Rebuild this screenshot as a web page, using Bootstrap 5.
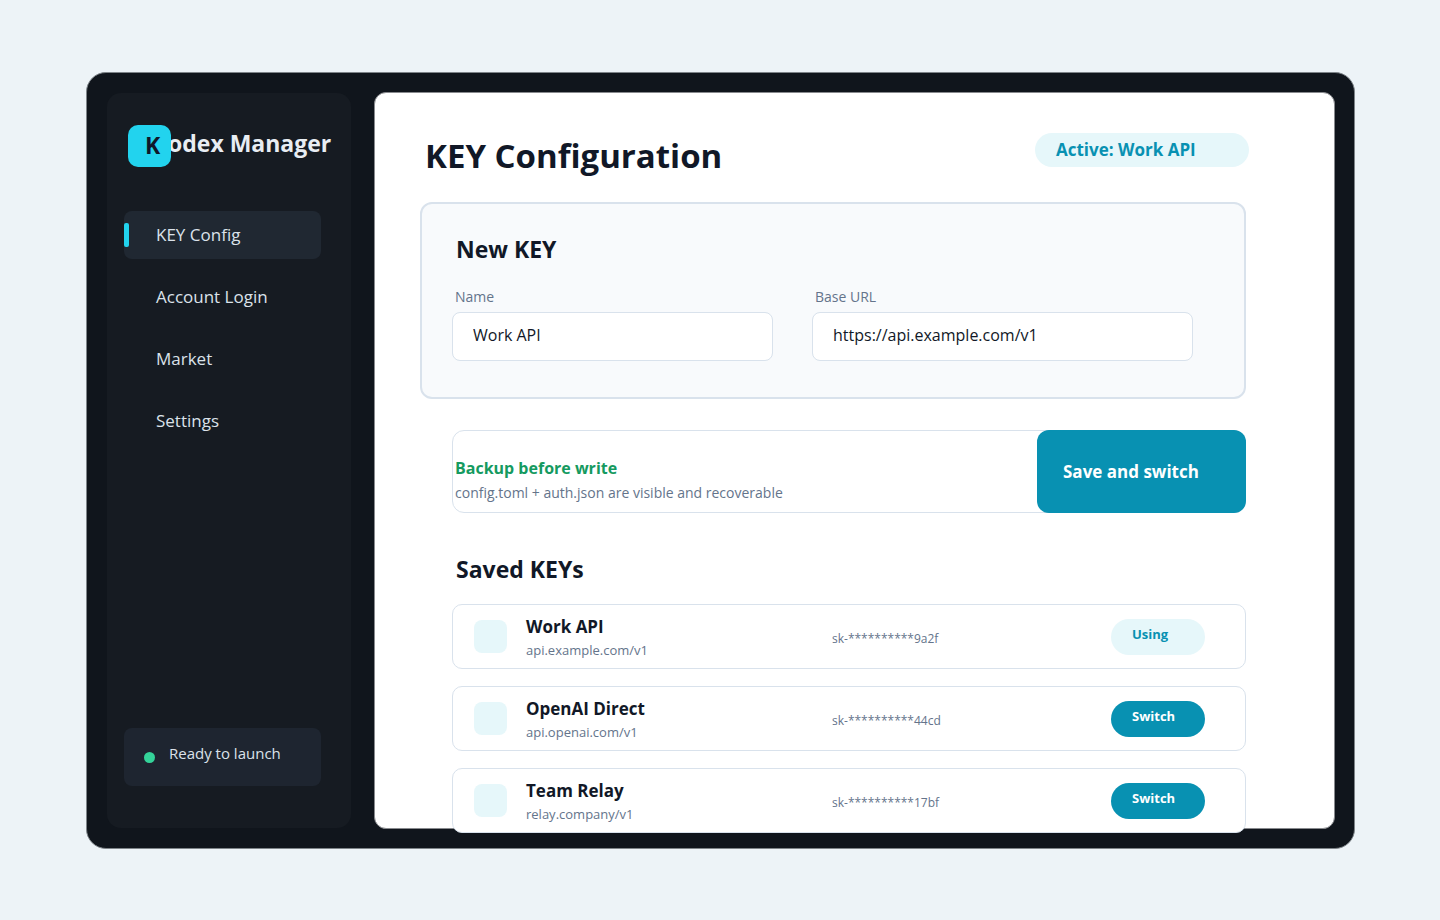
<!DOCTYPE html>
<html lang="en">
<head>
<meta charset="utf-8">
<meta name="viewport" content="width=device-width, initial-scale=1">
<title>Kodex Manager</title>
<link href="https://cdn.jsdelivr.net/npm/bootstrap@5.3.0/dist/css/bootstrap.min.css" rel="stylesheet">
<style>
  :root { --teal: #0891b2; --teal-soft: #e6f7fa; --ink: #111827; --muted-ink: #64748b; --line: #d9e2ec; }
  body { font-family: "Open Sans", "Noto Sans", sans-serif; background: #edf3f7; color: var(--ink); padding: 72px 85px 71px 86px; }
  .app-frame { background: #10151c; border-radius: 20px; padding: 19px 19px 19px 20px; gap: 23px; min-height: calc(100vh - 143px); border: 1px solid #7e8489; }
  .side-panel { flex: 0 0 244px; margin: 1px 0; background: #161b22; border-radius: 14px; padding: 32px 30px 42px 17px; color: #e5e7eb; }
  .brand-row { padding-left: 4px; margin-bottom: 44px; }
  .brand-logo { flex: none; width: 43px; height: 42px; padding-left: 17px; border-radius: 10px; background: #22d3ee; color: #0f172a; font-size: 23px; line-height: 40px; font-weight: 700; z-index: 1; }
  .brand-name { margin: 0 -20px 0 -3px; padding-bottom: 6px; font-size: 23px; line-height: 32px; font-weight: 700; color: #e8edf3; }
  .side-nav { gap: 14px; }
  .side-nav .nav-link { height: 48px; padding: 0 32px; border-radius: 8px; font-size: 17px; line-height: 48px; color: #dbe2ea; }
  .side-nav .nav-link.active { background: #202832; }
  .side-nav .nav-link.active::before { content: ""; position: absolute; left: 0; top: 12px; width: 5px; height: 24px; border-radius: 2px; background: #22d3ee; }
  .status-box { height: 58px; padding-left: 20px; gap: 14px; border-radius: 8px; background: #1e2530; font-size: 15px; line-height: 20px; color: #dbe2ea; }
  .status-dot { width: 11px; height: 11px; border-radius: 50%; background: #34d399; }
  .status-text { padding-bottom: 8px; }
  .main-panel { background: #fff; background-clip: border-box; border: 1px solid #888a8e; border-radius: 12px; padding: 40px 88px 0 45px; min-width: 0; }
  .page-head { padding-left: 5px; margin: 0 -3px 23px 0; }
  .page-title { font-size: 33px; line-height: 46px; font-weight: 700; margin: 0; }
  .active-pill { width: 214px; padding-left: 21px; border-radius: 17px; background: var(--teal-soft); color: var(--teal); font-size: 17px; line-height: 34px; font-weight: 700; }
  .section-title { font-size: 23px; line-height: 32px; font-weight: 700; padding-left: 4px; margin: 0; }
  .new-key { background: #f8fafc; border: 2px solid var(--line); border-radius: 12px; padding: 29px 51px 36px 30px; }
  .key-fields { display: grid; grid-template-columns: 321fr 381fr; gap: 39px; margin-top: 22px; }
  .key-fields label { display: block; font-size: 14px; line-height: 20px; padding-left: 3px; margin-bottom: 5px; color: var(--muted-ink); }
  .key-fields .form-control { height: 49px; padding: 0 20px 3px; border: 1px solid var(--line); border-radius: 8px; font-size: 16px; color: var(--ink); }
  .inset { margin-left: 32px; }
  .backup-row { margin-top: 31px; border: 1px solid var(--line); border-radius: 12px; }
  .backup-text { padding: 25px 2px 8px; }
  .backup-title { font-size: 16px; line-height: 24px; font-weight: 700; color: #159a60; margin-bottom: 2px; }
  .backup-note { font-size: 14px; line-height: 22px; color: var(--muted-ink); }
  .save-btn { flex: 0 0 209px; margin: -1px; padding: 0 26px; border: 0; border-radius: 12px; background: var(--teal); color: #fff; font-size: 17px; font-weight: 700; text-align: left; }
  .saved-head { margin: 40px 0 19px 32px; }
  .key-list { gap: 17px; margin-bottom: -5px; }
  .key-item { display: grid; grid-template-columns: 52px 306fr 279fr 94px; align-items: center; height: 65px; padding: 0 40px 0 21px; background: #fff; border: 1px solid var(--line); border-radius: 10px; }
  .key-icon { width: 33px; height: 33px; border-radius: 8px; background: var(--teal-soft); }
  .key-label { padding-top: 2px; }
  .key-name { font-size: 17px; line-height: 24px; font-weight: 700; }
  .key-url { font-size: 13px; line-height: 22px; color: var(--muted-ink); }
  .key-mask { font-size: 12px; line-height: 20px; padding-top: 4px; color: var(--muted-ink); }
  .key-action { height: 36px; padding: 0 21px 5px; border: 0; border-radius: 18px; font-size: 13px; line-height: 31px; font-weight: 700; text-align: left; background: var(--teal); color: #fff; }
  .key-action.in-use { background: var(--teal-soft); color: var(--teal); }
  @media (max-width: 1100px) {
    body { padding: 24px; }
    .app-frame { flex-wrap: wrap; }
    .main-panel { padding-right: 45px; }
  }
</style>
</head>
<body>
<div class="app-frame d-flex">
  <aside class="side-panel d-flex flex-column">
    <div class="brand-row d-flex align-items-center">
      <div class="brand-logo position-relative">K</div>
      <div class="brand-name text-nowrap">odex Manager</div>
    </div>
    <nav class="side-nav nav flex-column">
      <a class="nav-link active position-relative" aria-current="page" href="#">KEY Config</a>
      <a class="nav-link" href="#">Account Login</a>
      <a class="nav-link" href="#">Market</a>
      <a class="nav-link" href="#">Settings</a>
    </nav>
    <div class="status-box d-flex align-items-center mt-auto">
      <span class="status-dot"></span>
      <span class="status-text">Ready to launch</span>
    </div>
  </aside>

  <main class="main-panel flex-fill">
    <header class="page-head d-flex justify-content-between align-items-start">
      <h1 class="page-title">KEY Configuration</h1>
      <span class="active-pill text-nowrap">Active: Work API</span>
    </header>

    <form>
      <section class="new-key">
        <h2 class="section-title">New KEY</h2>
        <div class="key-fields">
          <div>
            <label for="keyName">Name</label>
            <input type="text" class="form-control" id="keyName" value="Work API">
          </div>
          <div>
            <label for="baseUrl">Base URL</label>
            <input type="text" class="form-control" id="baseUrl" value="https://api.example.com/v1">
          </div>
        </div>
      </section>

      <div class="backup-row inset d-flex">
        <div class="backup-text flex-fill">
          <div class="backup-title">Backup before write</div>
          <div class="backup-note">config.toml + auth.json are visible and recoverable</div>
        </div>
        <button type="button" class="save-btn">Save and switch</button>
      </div>
    </form>

    <h2 class="section-title saved-head">Saved KEYs</h2>
    <ul class="key-list inset list-unstyled d-flex flex-column">
      <li class="key-item">
        <span class="key-icon"></span>
        <div class="key-label"><div class="key-name">Work API</div><div class="key-url">api.example.com/v1</div></div>
        <span class="key-mask">sk-**********9a2f</span>
        <button type="button" class="key-action in-use">Using</button>
      </li>
      <li class="key-item">
        <span class="key-icon"></span>
        <div class="key-label"><div class="key-name">OpenAI Direct</div><div class="key-url">api.openai.com/v1</div></div>
        <span class="key-mask">sk-**********44cd</span>
        <button type="button" class="key-action">Switch</button>
      </li>
      <li class="key-item">
        <span class="key-icon"></span>
        <div class="key-label"><div class="key-name">Team Relay</div><div class="key-url">relay.company/v1</div></div>
        <span class="key-mask">sk-**********17bf</span>
        <button type="button" class="key-action">Switch</button>
      </li>
    </ul>
  </main>
</div>
<script src="https://cdn.jsdelivr.net/npm/bootstrap@5.3.0/dist/js/bootstrap.bundle.min.js"></script>
</body>
</html>
